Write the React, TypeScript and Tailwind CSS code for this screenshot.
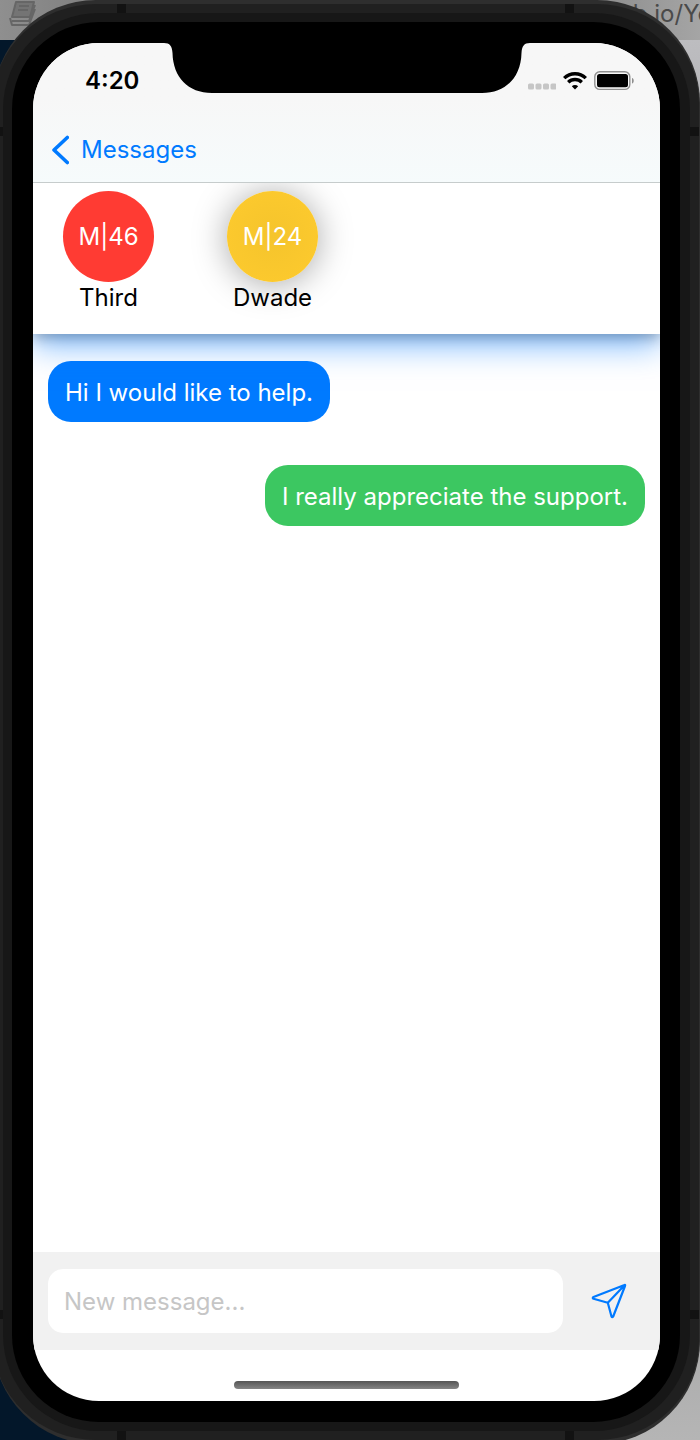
import React from "react";

const messages = [
  { text: "Hi I would like to help.", mine: false },
  { text: "I really appreciate the support.", mine: true },
];

function Backdrop() {
  return (
    <div className="absolute inset-0 flex flex-col" aria-hidden="true">
      <div className="flex h-10 justify-between bg-linear-to-r from-[#8f8f8f] via-[#555] to-[#a5a5a5]">
        <svg className="ml-2 h-7 w-9" viewBox="0 0 36 28" fill="#747474" stroke="#666" strokeWidth="2" strokeLinejoin="round">
          <path d="M8 2h18l-4 15H4z" />
          <path d="M2 18l2 7h17l6-16M4 21h17l6-16" fill="none" />
          <path d="M11 6h10M10 10h10" />
        </svg>
        <span className="-mr-3 text-[24px] leading-7 text-[#4a4a4a]">b.io/Yo</span>
      </div>
      <div className="flex grow">
        <div className="w-1/2 bg-[#03172a]" />
        <div className="w-1/2 bg-linear-to-b from-[#bdbdc0] via-[#77777a] to-[#b5b5b5]" />
      </div>
    </div>
  );
}

function AntennaBands() {
  return (
    <div aria-hidden="true">
      <span className="absolute left-[124px] top-0 h-[9px] w-[9px] bg-[#121212]" />
      <span className="absolute right-[125px] top-0 h-[9px] w-[9px] bg-[#121212]" />
      <span className="absolute bottom-0 left-[124px] h-[9px] w-[9px] bg-[#121212]" />
      <span className="absolute bottom-0 right-[125px] h-[9px] w-[9px] bg-[#121212]" />
      <span className="absolute left-0 top-[123px] h-[9px] w-[10px] bg-[#121212]" />
      <span className="absolute right-0 top-[123px] h-[9px] w-[9px] bg-[#121212]" />
      <span className="absolute bottom-[121px] left-0 h-[9px] w-[10px] bg-[#121212]" />
      <span className="absolute bottom-[121px] right-0 h-[9px] w-[9px] bg-[#121212]" />
    </div>
  );
}

function StatusBar() {
  return (
    <div className="relative flex h-[75px] items-center justify-between pl-[52px] pr-[26px]">
      <span className="text-[24px] font-semibold leading-8 text-black">4:20</span>
      <svg className="absolute left-1/2 top-0 h-[51px] w-[366px] -translate-x-1/2" viewBox="0 0 366 51" aria-hidden="true">
        <path d="M0 0C6 0 8 3 8.500 10C9 34 24 50 48 50H318C342 50 357 34 357.500 10C358 3 360 0 366 0Z" fill="#000" />
      </svg>
      <div className="flex items-center gap-[7px]">
        <svg className="h-5 w-7" viewBox="0 0 28 20" fill="#c6c6c6" aria-hidden="true">
          <rect x="0" y="12.500" width="6" height="6" rx="1.500" />
          <rect x="7.500" y="12.500" width="6" height="6" rx="1.500" />
          <rect x="15" y="12.500" width="6" height="6" rx="1.500" />
          <rect x="22.500" y="12.500" width="6" height="6" rx="1.500" />
        </svg>
        <svg className="h-5 w-6" viewBox="0 0 24 20" fill="none" stroke="#000" strokeWidth="3.400" aria-hidden="true">
          <path d="M1.200 7.100A15.500 15.500 0 0 1 22.800 7.100" />
          <path d="M5.200 11.300A9.800 9.800 0 0 1 18.800 11.300" />
          <path d="M12 18.500L8.800 15.200A4.600 4.600 0 0 1 15.200 15.200Z" fill="#000" stroke="none" />
        </svg>
        <svg className="h-5 w-10" viewBox="0 0 40 20" aria-hidden="true">
          <rect x="0.800" y="0.800" width="35" height="17.600" rx="5" fill="none" stroke="#8f8f8f" strokeWidth="1.400" />
          <rect x="3" y="3" width="31" height="13.200" rx="2.500" fill="#000" />
          <path d="M38 7C40.300 7.500 40.300 12 38 12.500Z" fill="#8f8f8f" />
        </svg>
      </div>
    </div>
  );
}

function Conversation() {
  return (
    <div className="flex grow flex-col overflow-hidden rounded-[66px] bg-white">
      <header className="relative z-20 border-b border-[#c6cccc] bg-linear-to-b from-[#f7f7f7] from-40% to-[#f6fbfc]">
        <StatusBar />
        <button type="button" className="flex h-16 items-center gap-3 pl-[19px] text-[#007aff]">
          <svg className="h-[30px] w-[17px]" viewBox="0 0 17 30" fill="none" stroke="currentColor" strokeWidth="3.600" strokeLinecap="round" strokeLinejoin="round" aria-hidden="true">
            <path d="M15.300 2.500L2 15L15.300 27.500" />
          </svg>
          <span className="text-[24px] leading-8">Messages</span>
        </button>
      </header>

      <section className="relative z-10 flex h-[151px] gap-[73px] bg-white px-[30px] pt-2 shadow-[0_4px_12px_rgba(0,0,0,0.25),0_12px_30px_rgba(0,122,255,0.5)]">
        <div className="flex w-[91px] flex-col items-center">
          <div className="flex size-[91px] items-center justify-center rounded-full bg-[#ff3b33] text-[24px] text-white">M|46</div>
          <span className="text-[24px] leading-8 text-black">Third</span>
        </div>
        <div className="flex w-[91px] flex-col items-center">
          <div className="flex size-[91px] items-center justify-center rounded-full bg-radial from-[#f5c42c] to-[#fecb2e] text-[24px] text-white shadow-[0_2px_34px_rgba(0,0,0,0.35)]">M|24</div>
          <span className="text-[24px] leading-8 text-black">Dwade</span>
        </div>
      </section>

      <ul className="flex grow flex-col gap-[43px] px-[15px] pt-[27px]">
        {messages.map((message) => (
          <li
            key={message.text}
            className={
              message.mine
                ? "self-end rounded-[23px] bg-[#3cc761] px-[17px] pb-[13px] pt-[15px] text-[24px] leading-[33px] text-white"
                : "self-start rounded-[23px] bg-[#007aff] px-[17px] pb-[13px] pt-[15px] text-[24px] leading-[33px] text-white"
            }
          >
            {message.text}
          </li>
        ))}
      </ul>

      <form className="flex items-center bg-[#f1f1f1] py-[17px] pl-[15px] pr-[5px]" onSubmit={(event) => event.preventDefault()}>
        <input
          type="text"
          aria-label="New message"
          placeholder="New message..."
          className="h-16 min-w-0 grow rounded-[15px] bg-white px-4 text-[24px] text-black outline-none placeholder:text-[#c6c6c6]"
        />
        <button type="button" aria-label="Send" className="flex w-[92px] items-center justify-center text-[#007aff]">
          <svg className="size-9" viewBox="0 0 36 36" fill="none" stroke="currentColor" strokeWidth="2.200" strokeLinejoin="round" aria-hidden="true">
            <path d="M33.500 2Q34.500 1.500 34 3L22.200 33.500Q21.200 35 20.500 33.500L16.800 19.700L2.500 15.800Q1 15 2.500 14ZM33.800 2L16.800 19.700" />
          </svg>
        </button>
      </form>
      <div className="flex h-[51px] items-end justify-center pb-3">
        <div className="h-2 w-[225px] rounded-full bg-linear-to-b from-[#555] to-[#858585]" />
      </div>
    </div>
  );
}

export default function App() {
  return (
    <main className="relative flex min-h-screen flex-col overflow-hidden font-['Inter','Liberation_Sans',sans-serif]">
      <Backdrop />
      <div className="relative -mb-1 -ml-[7px] flex grow flex-col rounded-[103px] border-t-4 border-r border-b-4 border-[#2e2e2e] bg-[#202020] p-[9px] pl-[10px]">
        <AntennaBands />
        <div className="flex grow flex-col rounded-[96px] bg-[#171717] p-[9px] pr-[10px]">
          <div className="flex grow flex-col rounded-[87px] bg-black py-[21px] pl-[21px] pr-5">
            <Conversation />
          </div>
        </div>
      </div>
    </main>
  );
}
